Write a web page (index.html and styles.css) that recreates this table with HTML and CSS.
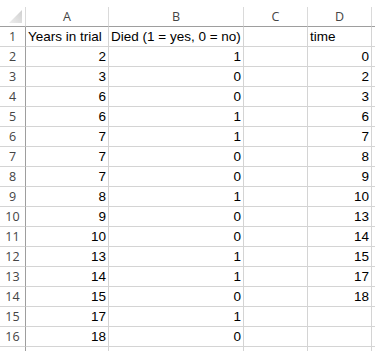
FILE: index.html
```html
<!DOCTYPE html>
<html>
<head>
<meta charset="utf-8">
<link rel="stylesheet" href="styles.css">
</head>
<body>
<div class="sheet">
  <div class="corner"><svg width="13" height="13" viewBox="0 0 13 13"><defs><linearGradient id="g" x1="0" y1="1" x2="1" y2="0"><stop offset="0" stop-color="#eeeeee"/><stop offset="1" stop-color="#cfcfcf"/></linearGradient></defs><polygon points="13,0 13,13 0,13" fill="url(#g)"/></svg></div>
  <div class="colhead">A</div><div class="colhead">B</div><div class="colhead">C</div><div class="colhead">D</div><div class="colhead"></div>

  <div class="rowhead">1</div><div class="cell">Years in trial</div><div class="cell">Died (1 = yes, 0 = no)</div><div class="cell"></div><div class="cell">time</div><div class="cell"></div>
  <div class="rowhead">2</div><div class="cell num">2</div><div class="cell num">1</div><div class="cell"></div><div class="cell num">0</div><div class="cell"></div>
  <div class="rowhead">3</div><div class="cell num">3</div><div class="cell num">0</div><div class="cell"></div><div class="cell num">2</div><div class="cell"></div>
  <div class="rowhead">4</div><div class="cell num">6</div><div class="cell num">0</div><div class="cell"></div><div class="cell num">3</div><div class="cell"></div>
  <div class="rowhead">5</div><div class="cell num">6</div><div class="cell num">1</div><div class="cell"></div><div class="cell num">6</div><div class="cell"></div>
  <div class="rowhead">6</div><div class="cell num">7</div><div class="cell num">1</div><div class="cell"></div><div class="cell num">7</div><div class="cell"></div>
  <div class="rowhead">7</div><div class="cell num">7</div><div class="cell num">0</div><div class="cell"></div><div class="cell num">8</div><div class="cell"></div>
  <div class="rowhead">8</div><div class="cell num">7</div><div class="cell num">0</div><div class="cell"></div><div class="cell num">9</div><div class="cell"></div>
  <div class="rowhead">9</div><div class="cell num">8</div><div class="cell num">1</div><div class="cell"></div><div class="cell num">10</div><div class="cell"></div>
  <div class="rowhead">10</div><div class="cell num">9</div><div class="cell num">0</div><div class="cell"></div><div class="cell num">13</div><div class="cell"></div>
  <div class="rowhead">11</div><div class="cell num">10</div><div class="cell num">0</div><div class="cell"></div><div class="cell num">14</div><div class="cell"></div>
  <div class="rowhead">12</div><div class="cell num">13</div><div class="cell num">1</div><div class="cell"></div><div class="cell num">15</div><div class="cell"></div>
  <div class="rowhead">13</div><div class="cell num">14</div><div class="cell num">1</div><div class="cell"></div><div class="cell num">17</div><div class="cell"></div>
  <div class="rowhead">14</div><div class="cell num">15</div><div class="cell num">0</div><div class="cell"></div><div class="cell num">18</div><div class="cell"></div>
  <div class="rowhead">15</div><div class="cell num">17</div><div class="cell num">1</div><div class="cell"></div><div class="cell"></div><div class="cell"></div>
  <div class="rowhead">16</div><div class="cell num">18</div><div class="cell num">0</div><div class="cell"></div><div class="cell"></div><div class="cell"></div>
  <div class="rowhead"></div><div class="cell"></div><div class="cell"></div><div class="cell"></div><div class="cell"></div><div class="cell"></div>
</div>
</body>
</html>
```
FILE: styles.css
```css
html, body {
  margin: 0;
  padding: 0;
  background: #ffffff;
  overflow: hidden;
  width: 375px;
  height: 351px;
}
.sheet {
  display: grid;
  grid-template-columns: 26px 83px 135px 64px 64px 20px;
  grid-auto-rows: 20px;
  padding-top: 7px;
  font-family: "Liberation Sans", Arial, sans-serif;
  font-size: 13.5px;
  color: #000;
}
.sheet > div {
  box-sizing: border-box;
  white-space: nowrap;
  overflow: visible;
}
.corner {
  border-right: 1px solid #dadada;
  border-bottom: 1px solid #9e9e9e;
  display: flex;
  align-items: flex-end;
  justify-content: flex-end;
  padding: 0 3px 3px 0;
}
.corner svg { display: block; }
.colhead {
  border-right: 1px solid #dadada;
  border-bottom: 1px solid #9e9e9e;
  display: flex;
  align-items: center;
  justify-content: center;
  font-family: "Open Sans", "DejaVu Sans", sans-serif;
  font-size: 12.5px;
  color: #444;
  padding-bottom: 1px;
}
.rowhead {
  border-right: 1px solid #9e9e9e;
  border-bottom: 1px solid #d4d4d4;
  display: flex;
  align-items: flex-end;
  justify-content: center;
  font-family: "Open Sans", "DejaVu Sans", sans-serif;
  font-size: 12.5px;
  color: #444;
  line-height: 17px;
  padding-bottom: 1px;
}
.cell {
  border-right: 1px solid #d4d4d4;
  border-bottom: 1px solid #d4d4d4;
  display: flex;
  align-items: flex-end;
  padding: 0 2px 1px 2px;
  line-height: 17px;
}
.cell.num {
  justify-content: flex-end;
}
```
